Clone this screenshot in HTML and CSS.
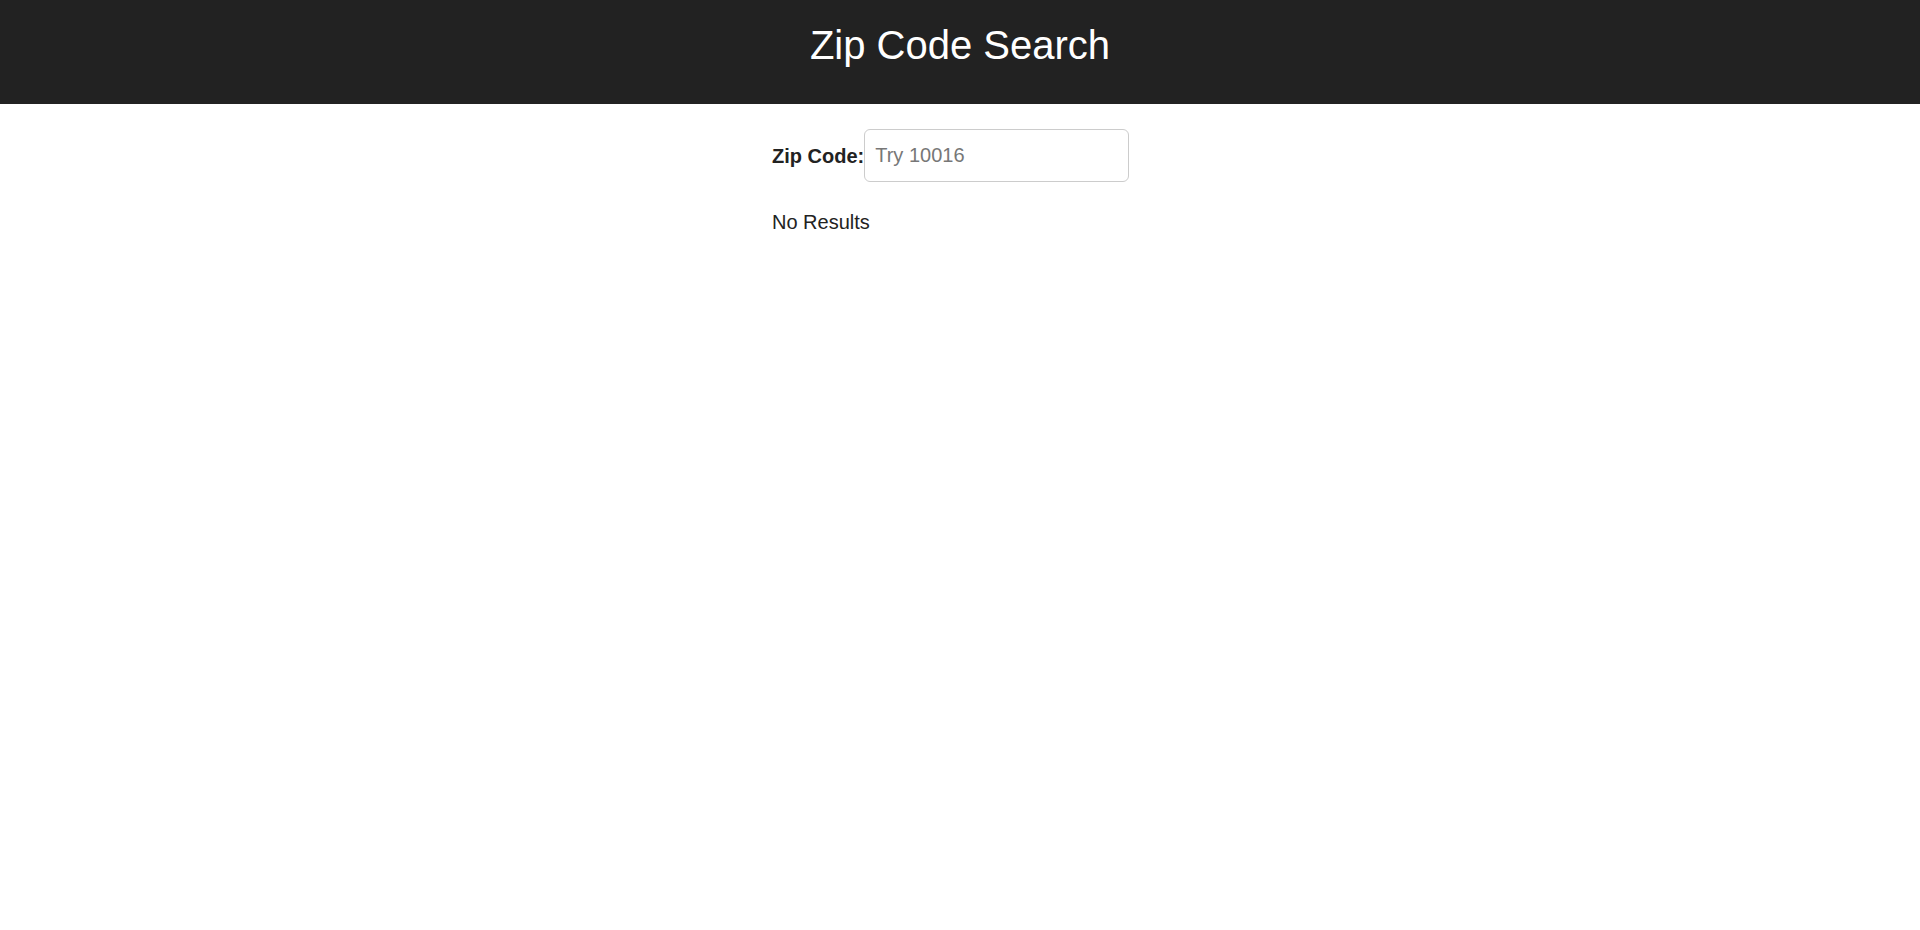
FILE: index.html
```html
<!DOCTYPE html>
<html lang="en">
<head>
<meta charset="utf-8">
<title>Zip Code Search</title>
<link rel="stylesheet" href="styles.css">
</head>
<body>
<header class="site-header">
  <h1 class="site-title">Zip Code Search</h1>
</header>
<main class="content">
  <form class="search-form">
    <label class="search-label" for="zip">Zip Code:</label>
    <input class="search-input" id="zip" type="text" placeholder="Try 10016">
  </form>
  <p class="results">No Results</p>
</main>
</body>
</html>
```

FILE: styles.css
```css
html, body {
  margin: 0;
  padding: 0;
  background: #fff;
}

body {
  font-family: "Liberation Sans", Arial, sans-serif;
  font-size: 20px;
  line-height: 28px;
  color: #222;
}

.site-header {
  background: #222;
  padding: 23px 0 37px;
  text-align: center;
}

.site-title {
  margin: 0;
  font-size: 40px;
  line-height: 44px;
  font-weight: normal;
  color: #fff;
}

.content {
  width: 376px;
  margin: 0 auto;
  padding-top: 25px;
  box-sizing: border-box;
}

.search-form {
  display: flex;
  align-items: center;
  margin: 0;
}

.search-label {
  font-weight: bold;
  color: #222;
}

.search-input {
  box-sizing: border-box;
  width: 265px;
  height: 53px;
  padding: 0 10px;
  border: 1px solid #ccc;
  border-radius: 6px;
  font-family: "Liberation Sans", Arial, sans-serif;
  font-size: 20px;
  color: #555;
  background: #fff;
  outline: none;
}

.search-input::placeholder {
  color: #777;
}

.results {
  margin: 26px 0 0;
  color: #222;
}
```
